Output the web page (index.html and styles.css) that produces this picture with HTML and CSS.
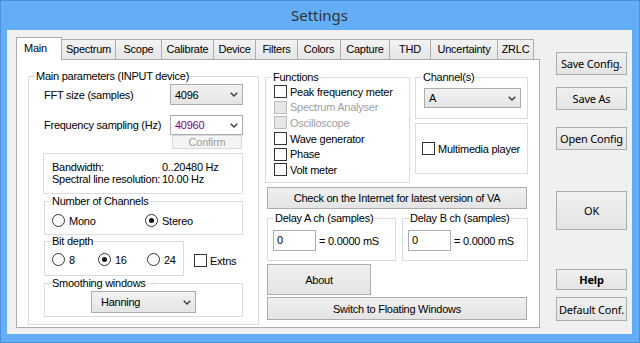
FILE: index.html
```html
<!DOCTYPE html>
<html>
<head>
<meta charset="utf-8">
<title>Settings</title>
<link rel="stylesheet" href="styles.css">
</head>
<body>
<div class="window">
  <div class="titlebar">Settings</div>
  <div class="client">
    <div class="tabs">
      <div class="tabstrip">
        <div class="tab sel w-main">Main</div>
        <div class="tab w-spectrum">Spectrum</div>
        <div class="tab w-scope">Scope</div>
        <div class="tab w-calibrate">Calibrate</div>
        <div class="tab w-device">Device</div>
        <div class="tab w-filters">Filters</div>
        <div class="tab w-colors">Colors</div>
        <div class="tab w-capture">Capture</div>
        <div class="tab w-thd">THD</div>
        <div class="tab w-unc">Uncertainty</div>
        <div class="tab w-zrlc">ZRLC</div>
      </div>
      <div class="panel">
        <fieldset class="grp g-main">
          <legend>Main parameters (INPUT device)</legend>
          <div class="mp">
            <div class="row r-fft">
              <span class="lbl">FFT size (samples)</span>
              <div class="combo c-fft"><span>4096</span><svg class="chev" width="8" height="5" viewBox="0 0 8 5"><path d="M0.7 0.7 L4 4 L7.3 0.7" fill="none" stroke="#3c3c3c" stroke-width="1.4"/></svg></div>
            </div>
            <div class="row r-freq">
              <span class="lbl">Frequency sampling (Hz)</span>
              <div class="combo edit c-freq"><span>40960</span><svg class="chev" width="8" height="5" viewBox="0 0 8 5"><path d="M0.7 0.7 L4 4 L7.3 0.7" fill="none" stroke="#3c3c3c" stroke-width="1.4"/></svg></div>
            </div>
            <div class="btn disabled confirm">Confirm</div>
            <div class="info">
              <span>Bandwidth:</span><span>0..20480 Hz</span>
              <span>Spectral line resolution:</span><span>10.00 Hz</span>
            </div>
            <fieldset class="grp g-chn">
              <legend>Number of Channels</legend>
              <div class="radios">
                <div class="radio w-mono"><span class="rd"></span><span>Mono</span></div>
                <div class="radio"><span class="rd on"></span><span>Stereo</span></div>
              </div>
            </fieldset>
            <div class="bitrow">
              <fieldset class="grp g-bit">
                <legend>Bit depth</legend>
                <div class="radios r-bits">
                  <div class="radio w-b8"><span class="rd"></span><span>8</span></div>
                  <div class="radio w-b16"><span class="rd on"></span><span>16</span></div>
                  <div class="radio"><span class="rd"></span><span>24</span></div>
                </div>
              </fieldset>
              <div class="check extns"><span class="cb"></span><span>Extns</span></div>
            </div>
            <fieldset class="grp g-smooth">
              <legend>Smoothing windows</legend>
              <div class="combo c-smooth"><span>Hanning</span><svg class="chev" width="8" height="5" viewBox="0 0 8 5"><path d="M0.7 0.7 L4 4 L7.3 0.7" fill="none" stroke="#3c3c3c" stroke-width="1.4"/></svg></div>
            </fieldset>
          </div>
        </fieldset>

        <div class="rc">
          <div class="toprow">
            <fieldset class="grp g-func">
              <legend>Functions</legend>
              <div class="checks">
                <div class="check"><span class="cb"></span><span>Peak frequency meter</span></div>
                <div class="check dis"><span class="cb"></span><span>Spectrum Analyser</span></div>
                <div class="check dis"><span class="cb"></span><span>Oscilloscope</span></div>
                <div class="check"><span class="cb"></span><span>Wave generator</span></div>
                <div class="check"><span class="cb"></span><span>Phase</span></div>
                <div class="check"><span class="cb"></span><span>Volt meter</span></div>
              </div>
            </fieldset>
            <div class="chcol">
              <fieldset class="grp g-chan">
                <legend>Channel(s)</legend>
                <div class="combo c-chan"><span>A</span><svg class="chev" width="8" height="5" viewBox="0 0 8 5"><path d="M0.7 0.7 L4 4 L7.3 0.7" fill="none" stroke="#3c3c3c" stroke-width="1.4"/></svg></div>
              </fieldset>
              <div class="mm">
                <div class="check"><span class="cb"></span><span>Multimedia player</span></div>
              </div>
            </div>
          </div>
          <div class="btn wide b-check">Check on the Internet for latest version of VA</div>
          <div class="delayrow">
            <fieldset class="grp g-da">
              <legend>Delay A ch (samples)</legend>
              <div class="drow"><div class="tb">0</div><span>= 0.0000 mS</span></div>
            </fieldset>
            <fieldset class="grp g-db">
              <legend>Delay B ch (samples)</legend>
              <div class="drow"><div class="tb">0</div><span>= 0.0000 mS</span></div>
            </fieldset>
          </div>
          <div class="btn b-about">About</div>
          <div class="btn wide b-switch">Switch to Floating Windows</div>
        </div>
      </div>
    </div>
    <div class="side">
      <div class="btn sbtn s-save">Save Config.</div>
      <div class="btn sbtn s-saveas">Save As</div>
      <div class="btn sbtn s-open">Open Config</div>
      <div class="btn sbtn s-ok">OK</div>
      <div class="btn sbtn s-help">Help</div>
      <div class="btn sbtn s-def">Default Conf.</div>
    </div>
  </div>
</div>
</body>
</html>
```

FILE: styles.css
```css
* { box-sizing: border-box; }
html, body { margin: 0; padding: 0; }
body {
  width: 640px; height: 343px; overflow: hidden;
  font-family: "Liberation Sans", Arial, sans-serif;
  font-size: 11px; letter-spacing: -0.25px; color: #000;
}
.window {
  width: 640px; height: 343px;
  background: #63aef7;
  border: 1px solid #4b8fdb;
  padding: 0 7px 8px 6px;
  display: flex; flex-direction: column;
}
.titlebar {
  height: 29px; line-height: 29px; text-align: center;
  font-family: "Noto Sans", "Open Sans", sans-serif;
  font-size: 15px; letter-spacing: 0; color: #333;
}
.client {
  height: 304px; background: #f0f0f0;
  display: flex; align-items: flex-start;
  padding: 7px 0 0 9px;
}
.tabs { width: 524px; display: flex; flex-direction: column; }
.tabstrip { display: flex; align-items: flex-end; height: 22px; }
.tab {
  height: 20px; border-top: 1px solid #acacac; border-right: 1px solid #acacac;
  background: linear-gradient(#f3f3f3, #e6e6e6);
  text-align: center; line-height: 19px; white-space: nowrap;
}
.tab.sel {
  height: 23px; margin-bottom: -1px; position: relative; z-index: 1;
  border-left: 1px solid #acacac; background: #fff;
  text-align: left; padding-left: 7px; line-height: 20px;
}
.w-main { width: 46px; }
.w-spectrum { width: 54px; }
.w-scope { width: 46px; }
.w-calibrate { width: 52px; }
.w-device { width: 42px; }
.w-filters { width: 42px; }
.w-colors { width: 43px; }
.w-capture { width: 49px; }
.w-thd { width: 41px; }
.w-unc { width: 67px; }
.w-zrlc { width: 36px; }
.panel {
  height: 269px; border: 1px solid #acacac; background: #fff;
  display: flex; align-items: flex-start;
}
.grp { margin: 0; padding: 0; border: 1px solid #dcdcdc; min-width: 0; }
.grp > legend { padding: 0 1px; margin-left: 6px; line-height: 13px; height: 13px; }

.g-main { width: 231px; height: 255px; margin: 10px 0 0 11px; }
.mp { width: 214px; padding-left: 14px; display: flex; flex-direction: column; }
.row { display: flex; align-items: center; justify-content: space-between; }
.lbl { padding-left: 1px; }
.r-fft { margin-top: 1px; height: 21px; }
.r-freq { margin-top: 10px; height: 20px; }

.combo {
  display: flex; align-items: center; justify-content: space-between;
  border: 1px solid #acacac; background: linear-gradient(#f2f2f2, #e4e4e4);
  padding: 0 4px 0 4px; height: 100%;
}
.combo.edit { background: #fff; border-color: #abadb3; }
.combo.edit span { color: #800080; }
.chev { display: block; }
.c-fft { width: 73px; }
.c-freq { width: 73px; }
.c-smooth { width: 105px; height: 22px; margin: 1px 0 0 46px; padding-left: 9px; }
.c-chan { width: 97px; height: 20px; margin: 4px 0 0 8px; }

.btn {
  display: flex; align-items: center; justify-content: center;
  border: 1px solid #acacac; background: linear-gradient(#f0f0f0, #e4e4e4);
  white-space: nowrap;
}
.btn.disabled { border-color: #d9d9d9; background: #f4f4f4; color: #a0a0a0; }
.confirm { align-self: flex-end; width: 70px; height: 14px; margin-right: 1px; }

.info {
  margin-top: 4px; width: 200px; height: 41px; border: 1px solid #dcdcdc;
  padding: 8px 0 0 8px; display: grid; grid-template-columns: 110px auto;
  align-content: start; line-height: 11.5px;
}

.g-chn { margin: 1px 0 0 1px; width: 199px; height: 40px; }
.radios { display: flex; margin-top: 6px; padding-left: 7px; }
.radio { display: flex; align-items: center; gap: 4px; height: 13px; }
.rd {
  width: 13px; height: 13px; border-radius: 50%; border: 1px solid #333; background: #fff;
  display: flex; align-items: center; justify-content: center;
}
.rd.on::after { content: ""; width: 5px; height: 5px; border-radius: 50%; background: #111; }
.w-mono { width: 93px; }
.r-bits { margin-top: 5px; }
.w-b8 { width: 46px; }
.w-b16 { width: 49px; }
.bitrow { display: flex; align-items: flex-start; }
.g-bit { margin: 0 0 0 1px; width: 140px; height: 41px; }
.extns { margin: 19px 0 0 10px; }
.g-smooth { margin: 1px 0 0 1px; width: 199px; height: 40px; }

.check { display: flex; align-items: center; gap: 3px; }
.cb { width: 13px; height: 13px; border: 1px solid #333; background: #fff; flex: none; }
.check.dis { color: #a0a0a0; }
.check.dis .cb { border-color: #bcbcbc; background: #e6e6e6; }

.rc { width: 271px; margin: 11px 0 0 6px; display: flex; flex-direction: column; }
.toprow { display: flex; align-items: flex-start; }
.g-func { width: 145px; height: 112px; }
.checks { padding-left: 8px; display: flex; flex-direction: column; }
.checks .check { height: 15.6px; }
.chcol { width: 113px; margin-left: 5px; display: flex; flex-direction: column; }
.g-chan { width: 113px; height: 48px; }
.mm {
  margin-top: 4px; height: 51px; border: 1px solid #dcdcdc;
  display: flex; align-items: center; padding-left: 6px;
}
.wide { width: 260px; }
.b-check { margin: 4px 0 0 2px; height: 22px; }
.delayrow { display: flex; margin: 3px 0 0 2px; }
.g-da { width: 129px; height: 49px; }
.g-db { width: 126px; height: 49px; margin-left: 6px; }
.drow { display: flex; align-items: center; gap: 3px; margin-top: 5px; padding-left: 5px; }
.tb {
  width: 43px; height: 21px; border: 1px solid #abadb3; background: #fff;
  padding-left: 3px; line-height: 19px;
}
.b-about { margin: 3px 0 0 2px; width: 104px; height: 31px; }
.b-switch { margin: 2px 0 0 2px; height: 23px; }

.side { width: 71px; margin: 15px 0 0 16px; display: flex; flex-direction: column; }
.sbtn { font-family: "Noto Sans", "Open Sans", sans-serif; font-size: 11px; letter-spacing: -0.2px; }
.s-save { height: 23px; }
.s-saveas { height: 23px; margin-top: 12px; }
.s-open { height: 23px; margin-top: 17px; }
.s-ok { height: 39px; margin-top: 41px; }
.s-help { height: 21px; margin-top: 39px; font-weight: bold; }
.s-def { height: 24px; margin-top: 7px; }
```
